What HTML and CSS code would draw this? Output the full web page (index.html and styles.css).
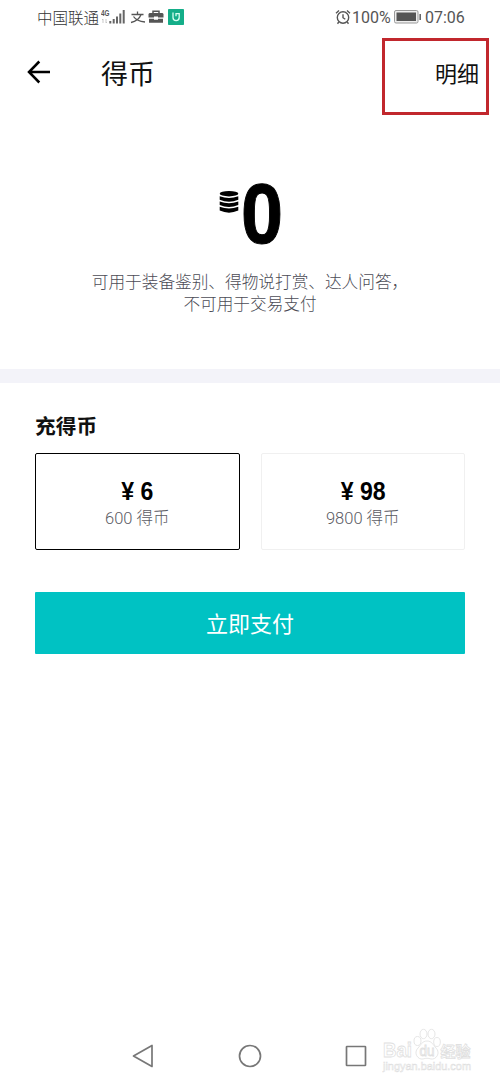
FILE: index.html
```html
<!DOCTYPE html>
<html lang="zh-CN">
<head>
<meta charset="utf-8">
<title>得币</title>
<link rel="stylesheet" href="styles.css">
</head>
<body>
<div class="screen">
  <div class="status">
    <div class="status-left">
      <span class="carrier">中国联通</span>
      <svg class="signal" width="26" height="18" viewBox="0 0 26 18">
        <text class="net" x="0" y="8" textLength="8.500" lengthAdjust="spacingAndGlyphs">4G</text>
        <path d="M2 11v4M1 12l1-1M5 11v4l1-1" fill="none" stroke="#bbb" stroke-width=".8"/>
        <path d="M9.300 13v2.500M12.700 11v4.500M16 8.500v7M19.300 5.500v10M22.700 2v13.500" fill="none" stroke="#666" stroke-width="2"/>
      </svg>
      <svg class="alipay" width="16" height="16" viewBox="0 0 16 16" fill="none" stroke="#555" stroke-width="1.300">
        <path d="M1.500 5.500h12M7.500 2.500v3M11 5.800C9.500 9.500 6 12.500 1 13.500M3.500 7.500c2 3 6 5 11.500 5.500"/>
      </svg>
      <svg class="case" width="16" height="16" viewBox="0 0 16 16">
        <path d="M5 4V2.300h6V4" fill="none" stroke="#555" stroke-width="1.500"/>
        <path d="M1.500 4h13l1 1v3.500H10v-1H6v1H.5V5zM1 9.700h5v1h4v-1h5v4H1z" fill="#555"/>
      </svg>
      <svg width="16" height="16" viewBox="0 0 16 16">
        <rect width="16" height="16" rx=".8" fill="#14ae89"/>
        <path d="M5 3.500v5a3.100 3.100 0 0 0 6.200 0V4.700H8v2.500" fill="none" stroke="#d7fff2" stroke-width="1.300"/>
      </svg>
    </div>
    <div class="status-right">
      <svg width="16" height="16" viewBox="0 0 16 16" fill="none" stroke="#555" stroke-width="1.400">
        <circle cx="8" cy="8.500" r="5.700"/><path d="M8 5.200v3.500l2.300 1.600M1 4.200l3-2.700M15 4.200l-3-2.700M3.800 13l-1.300 1.700M12.200 13l1.300 1.700"/>
      </svg>
      <span class="percent">100%</span>
      <svg class="battery" width="28" height="14" viewBox="0 0 28 14">
        <rect x=".5" y=".5" width="23.500" height="12.500" rx="1.500" fill="#eee" stroke="#999"/>
        <rect x="2.500" y="2.500" width="19.500" height="8.500" fill="#555"/><path d="M26.200 4v6" stroke="#666" stroke-width="1.600"/>
      </svg>
      <span class="clock">07:06</span>
    </div>
  </div>
  <header class="header">
    <svg class="back" width="24" height="24" viewBox="0 0 24 24" fill="none" stroke="#000" stroke-width="2.500"><path d="M12.300 1.500 2 12l10.300 10.500M2 12h21"/></svg>
    <h1 class="title">得币</h1>
    <div class="details">明细</div>
  </header>
  <section class="balance">
    <div class="amount">
      <svg class="coins" width="20" height="24" viewBox="0 0 20 24">
        <ellipse cx="10" cy="3.700" rx="9.300" ry="2.700"/>
        <path d="M.7 6.300q9.300 3.400 18.600 0v3.400q-9.300 4.200-18.600 0zM.7 11.500q9.300 3.400 18.600 0v3.400q-9.300 4.200-18.600 0zM.7 16.700q9.300 3.400 18.600 0v3.900q-9.300 4.200-18.600 0z"/>
      </svg>
      <span class="zero">0</span>
    </div>
    <p class="desc">可用于装备鉴别、得物说打赏、达人问答，<br>不可用于交易支付</p>
  </section>
  <main class="recharge">
    <h2 class="subtitle">充得币</h2>
    <div class="options">
      <div class="option selected"><div class="price">¥ 6</div><div class="coin-count">600 得币</div></div>
      <div class="option"><div class="price">¥ 98</div><div class="coin-count">9800 得币</div></div>
    </div>
    <div class="pay">立即支付</div>
  </main>
  <nav class="nav">
    <svg width="24" height="24" viewBox="0 0 24 24"><path d="M21 1.500v21L2.500 12z"/></svg>
    <svg width="24" height="24" viewBox="0 0 24 24"><circle cx="12" cy="12" r="10.500"/></svg>
    <svg width="24" height="24" viewBox="0 0 24 24"><rect x="2.500" y="2.500" width="19" height="19" rx=".5"/></svg>
  </nav>
  <svg class="watermark" width="96" height="50" viewBox="0 0 96 50">
    <g class="mark">
      <text x="1" y="32" font-size="21" textLength="29" lengthAdjust="spacingAndGlyphs">Bai</text>
      <ellipse cx="35.500" cy="16" rx="3.500" ry="4.500"/><ellipse cx="41.500" cy="9" rx="3.500" ry="4.700"/><ellipse cx="49.500" cy="9" rx="3.500" ry="4.700"/><ellipse cx="55" cy="17" rx="3.300" ry="4.500"/>
      <path d="M45 16c5 0 6 4 9 7 5 5 0 12-5 11-3-1-5-1-8 0-5 1-10-6-5-11 3-3 4-7 9-7z"/>
      <text class="du" x="37.500" y="31" font-size="14" textLength="15" lengthAdjust="spacingAndGlyphs">du</text>
      <text x="58.500" y="32" font-size="15" textLength="30" lengthAdjust="spacingAndGlyphs">经验</text>
    </g>
    <text class="site" x="1" y="45" textLength="88" lengthAdjust="spacingAndGlyphs">jingyan.baidu.com</text>
  </svg>
</div>
</body>
</html>
```
FILE: styles.css
```css
* { box-sizing: border-box; }
body { margin: 0; background: #fff; font-family: Roboto, "Noto Sans CJK SC", sans-serif; }
h1, h2, p { margin: 0; font-weight: 400; }
svg { display: block; flex: none; }
.screen { position: relative; width: 500px; height: 1083px; display: flex; flex-direction: column; overflow: hidden; }
.status { height: 34px; padding: 0 35px 0 37px; display: flex; justify-content: space-between; color: #555; }
.status-left, .status-right { display: flex; align-items: center; height: 34px; }
.carrier { font-size: 15.500px; font-weight: 300; width: 64px; white-space: nowrap; color: #333; }
.net { font: bold 9px "Liberation Sans", sans-serif; fill: #555; }
.signal { margin-right: 3px; }
.alipay { margin-right: 2px; }
.case { margin-right: 4px; }
.percent { font-size: 16px; margin-left: 1px; width: 42px; }
.clock { font-size: 16px; margin-left: 3px; width: 40px; white-space: nowrap; }
.header { height: 80px; display: flex; align-items: flex-start; padding: 4px 11px 0 27px; }
.back { margin-top: 22px; }
.title { font-size: 27px; line-height: 40px; margin: 17px 0 0 50px; color: #111; }
.details { margin-left: auto; width: 107px; height: 77px; border: 3px solid #c1272d; padding: 18px 7px 0 0; text-align: right; font-size: 22px; line-height: 32px; color: #111; }
.balance { height: 269px; padding-top: 60px; border-bottom: 14px solid #f3f3f9; }
.amount { display: flex; height: 98px; padding-left: 219px; align-items: flex-start; }
.coins { margin-top: 16px; }
.zero { font-family: "Liberation Sans", sans-serif; font-size: 85px; line-height: 82px; font-weight: 700; width: 48px; transform: scaleX(.89); transform-origin: left; margin: -1px 0 0 2px; -webkit-text-stroke: 1px #000; }
.desc { text-align: center; font-size: 16.670px; line-height: 22px; font-weight: 300; color: #4c4c56; white-space: nowrap; }
.recharge { padding: 29px 35px 0; }
.subtitle { font-size: 20.700px; line-height: 30px; font-weight: 700; color: #111; }
.options { display: flex; gap: 21px; margin-top: 11px; }
.option { width: 204.500px; height: 97px; border: 1px solid #f0f0f0; border-radius: 2px; text-align: center; padding-top: 22px; }
.selected { border: 1.500px solid #000; }
.price { font-family: "Liberation Sans", sans-serif; font-size: 26.500px; line-height: 30px; font-weight: 700; transform: scaleX(.87); }
.coin-count { font-size: 16.500px; line-height: 25px; font-weight: 300; color: #5b5b63; }
.pay { margin-top: 42px; height: 62px; background: #00c2c3; border-radius: 1px; color: #fff; text-align: center; font-size: 22px; line-height: 65px; }
.nav { margin-top: auto; height: 54px; padding: 15px 132px 0 131px; display: flex; justify-content: space-between; }
.nav svg { fill: none; stroke: #777; stroke-width: 1.700; stroke-linejoin: round; }
.watermark { position: absolute; left: 382px; top: 1025px; }
.mark { fill: #fff; stroke: #e0e0e0; stroke-width: .8; font-family: "Liberation Sans", "Noto Sans CJK SC", sans-serif; font-weight: 700; }
.du { font-weight: 400; }
.site { font: 11px "Liberation Sans", sans-serif; fill: #fff; stroke: #ddd; stroke-width: .5; }
```
